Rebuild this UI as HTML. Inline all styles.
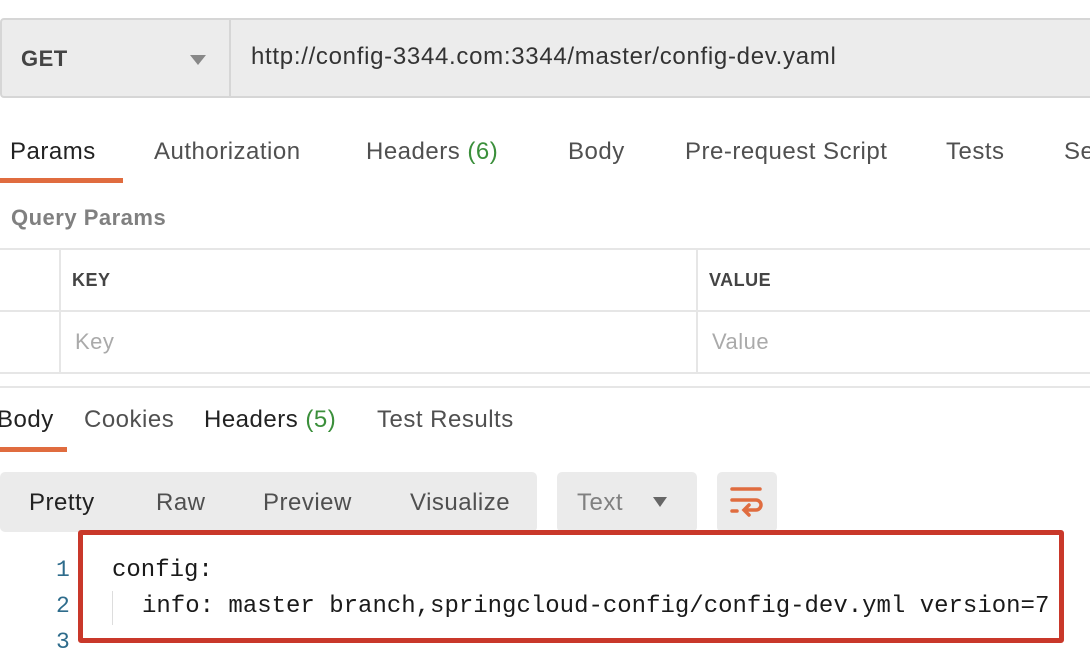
<!DOCTYPE html>
<html><head><meta charset="utf-8"><style>
body{margin:0;width:1090px;height:666px;overflow:hidden;background:#fff;font-family:"Liberation Sans",sans-serif;position:relative}
.a{position:absolute}
.t{position:absolute;font-size:24px;letter-spacing:0.5px;color:#505050;white-space:nowrap}
.g{color:#3b8f3b}
.mono{font-family:"Liberation Mono",monospace;font-size:24px;color:#1a1a1a;white-space:pre}
.ln{font-family:"Liberation Mono",monospace;font-size:23px;color:#2e6c8c}
</style></head><body>
<div class="a" style="left:0;top:18px;width:1100px;height:80px;background:#ececec;border:2px solid #d6d6d6;border-radius:4px;box-sizing:border-box"></div>
<div class="a" style="left:229px;top:20px;width:2px;height:76px;background:#d6d6d6"></div>
<div class="t" style="left:21px;top:46px;font-weight:bold;color:#444;font-size:22px">GET</div>
<div class="a" style="left:190px;top:55px;border-left:8px solid transparent;border-right:8px solid transparent;border-top:10px solid #888"></div>
<div class="t" style="left:251px;top:43px;color:#333;font-size:24px;letter-spacing:0.7px">http://config-3344.com:3344/master/config-dev.yaml</div>

<div class="t" style="left:10px;top:138px;color:#222">Params</div>
<div class="t" style="left:154px;top:138px">Authorization</div>
<div class="t" style="left:366px;top:138px">Headers <span class="g">(6)</span></div>
<div class="t" style="left:568px;top:138px">Body</div>
<div class="t" style="left:685px;top:138px">Pre-request Script</div>
<div class="t" style="left:946px;top:138px">Tests</div>
<div class="t" style="left:1064px;top:138px">Se</div>
<div class="a" style="left:0;top:178px;width:123px;height:5px;background:#e06c3f"></div>

<div class="t" style="left:11px;top:205px;font-weight:bold;color:#808080;font-size:22px">Query Params</div>
<div class="a" style="left:0;top:248px;width:1090px;height:2px;background:#e6e6e6"></div>
<div class="a" style="left:0;top:310px;width:1090px;height:2px;background:#e6e6e6"></div>
<div class="a" style="left:0;top:372px;width:1090px;height:2px;background:#e6e6e6"></div>
<div class="a" style="left:0;top:386px;width:1090px;height:2px;background:#e6e6e6"></div>
<div class="a" style="left:59px;top:248px;width:2px;height:125px;background:#e6e6e6"></div>
<div class="a" style="left:696px;top:248px;width:2px;height:125px;background:#e6e6e6"></div>
<div class="t" style="left:72px;top:270px;font-weight:bold;color:#444;font-size:18px">KEY</div>
<div class="t" style="left:709px;top:270px;font-weight:bold;color:#444;font-size:18px">VALUE</div>
<div class="t" style="left:75px;top:329px;color:#aaa;font-size:22px">Key</div>
<div class="t" style="left:712px;top:329px;color:#aaa;font-size:22px">Value</div>

<div class="t" style="left:-3px;top:406px;color:#222">Body</div>
<div class="t" style="left:84px;top:406px">Cookies</div>
<div class="t" style="left:204px;top:406px;color:#222">Headers <span class="g">(5)</span></div>
<div class="t" style="left:377px;top:406px">Test Results</div>
<div class="a" style="left:0;top:447px;width:67px;height:5px;background:#e06c3f"></div>

<div class="a" style="left:0;top:472px;width:537px;height:60px;background:#ebebeb;border-radius:5px"></div>
<div class="t" style="left:29px;top:489px;color:#222">Pretty</div>
<div class="t" style="left:156px;top:489px">Raw</div>
<div class="t" style="left:263px;top:489px">Preview</div>
<div class="t" style="left:410px;top:489px">Visualize</div>
<div class="a" style="left:557px;top:472px;width:140px;height:60px;background:#ebebeb;border-radius:5px"></div>
<div class="t" style="left:577px;top:489px;color:#808080">Text</div>
<div class="a" style="left:653px;top:497px;border-left:7px solid transparent;border-right:7px solid transparent;border-top:10px solid #666"></div>
<div class="a" style="left:717px;top:472px;width:60px;height:60px;background:#ebebeb;border-radius:5px"></div>
<svg class="a" style="left:729px;top:485px" width="36" height="36" viewBox="0 0 36 36" fill="none" stroke="#e06c3f" stroke-width="3.5" stroke-linecap="round"><path d="M3 4H31M3 15H27a5 5 0 0 1 0 10H16M20 20l-5 5 5 5M3 26H8"/></svg>

<div class="a" style="left:78px;top:530px;width:986px;height:113px;border:5px solid #c9382a;box-sizing:border-box;border-radius:3px"></div>
<div class="a ln" style="left:56px;top:557px">1</div>
<div class="a ln" style="left:56px;top:593px">2</div>
<div class="a ln" style="left:56px;top:629px">3</div>
<div class="a mono" style="left:112px;top:557px">config:</div>
<div class="a" style="left:112px;top:591px;width:1px;height:34px;background:#ddd"></div>
<div class="a mono" style="left:142px;top:593px">info: master branch,springcloud-config/config-dev.yml version=7</div>
</body></html>
